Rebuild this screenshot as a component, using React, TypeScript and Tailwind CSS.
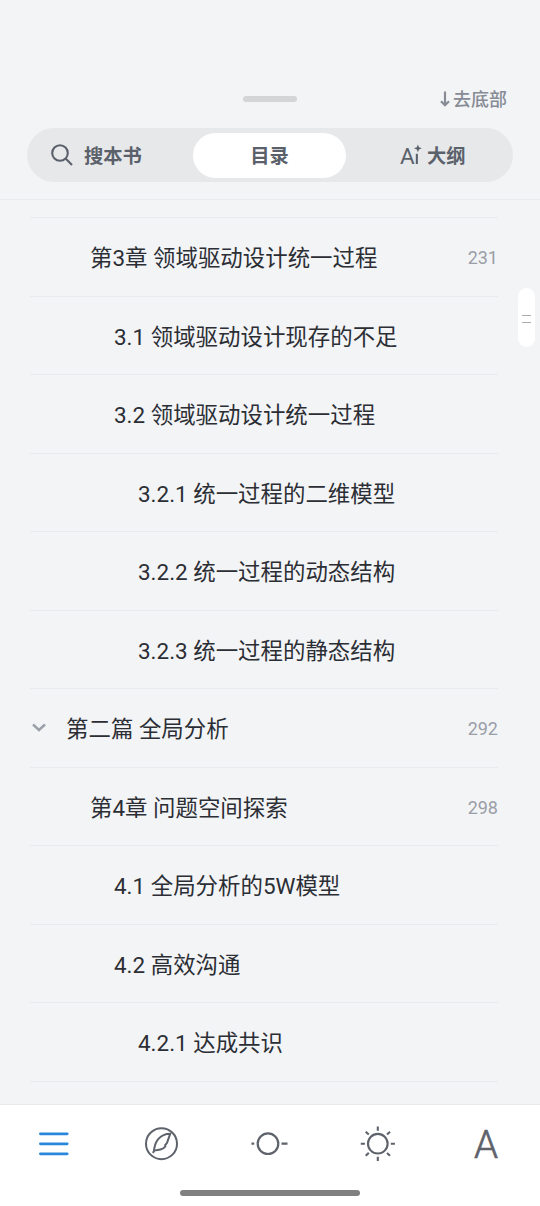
import clsx from 'clsx';

type Item = {
  title: string;
  level: number;
  page?: number;
  open?: boolean;
};

const items: Item[] = [
  { title: '第3章 领域驱动设计统一过程', level: 1, page: 231 },
  { title: '3.1 领域驱动设计现存的不足', level: 2 },
  { title: '3.2 领域驱动设计统一过程', level: 2 },
  { title: '3.2.1 统一过程的二维模型', level: 3 },
  { title: '3.2.2 统一过程的动态结构', level: 3 },
  { title: '3.2.3 统一过程的静态结构', level: 3 },
  { title: '第二篇 全局分析', level: 0, page: 292, open: true },
  { title: '第4章 问题空间探索', level: 1, page: 298 },
  { title: '4.1 全局分析的5W模型', level: 2 },
  { title: '4.2 高效沟通', level: 2 },
  { title: '4.2.1 达成共识', level: 3 },
];

const indent = ['pl-0', 'pl-6', 'pl-12', 'pl-[72px]'];

function SearchIcon() {
  return (
    <svg width="22" height="22" viewBox="0 0 22 22" fill="none" stroke="currentColor" strokeWidth="2.1">
      <circle cx="9" cy="9" r="7.8" />
      <path d="M14.6 14.6L21 21" />
    </svg>
  );
}

function AiIcon() {
  return (
    <span className="flex h-[22px] w-[21px] items-center">
      <span className="w-[14px] pt-0.5 text-[22.5px] leading-[22px]">A</span>
      <svg className="shrink-0" width="8" height="22" viewBox="0 0 8 22" fill="currentColor">
        <path d="M1.8 9.8h2.1v10.2H1.8z" />
        <path d="M3.9 0.4L5 3.2L7.8 4.3L5 5.4L3.9 8.2L2.8 5.4L0 4.3L2.8 3.2Z" />
      </svg>
    </span>
  );
}

function Row({ item }: { item: Item }) {
  return (
    <li className="flex h-[78.5px] items-center border-b border-[#e9eaed]">
      <span className="flex w-9 shrink-0 text-[#9ba0a9]">
        {item.open && (
          <svg className="ml-0.5" width="14" height="10" viewBox="0 0 14 10" fill="none" stroke="currentColor" strokeWidth="2.4">
            <path d="M1 1.5L7 7L13 1.5" />
          </svg>
        )}
      </span>
      <span className={clsx('flex-1 whitespace-nowrap pt-[3px] text-[22.45px] leading-8', indent[item.level])}>{item.title}</span>
      {item.page && <span className="pt-[3px] text-[18px] leading-6 text-[#9a9ea7]">{item.page}</span>}
    </li>
  );
}

function Header() {
  return (
    <header className="flex h-[200px] flex-col border-b border-[#e9eaed] px-[27px] pt-[86px]">
      <div className="grid h-[26px] grid-cols-3 grid-rows-[25px] items-center">
        <span className="col-start-2 h-1.5 w-[54px] justify-self-center rounded-full bg-[#d4d5d7]" />
        <button className="mr-1.5 flex items-center justify-self-end text-[#868b95]">
          <svg className="mr-[3px]" width="10" height="16" viewBox="0 0 10 16" fill="none" stroke="currentColor" strokeWidth="2.2">
            <path d="M5 0.5V14M1 10.2L5 14.2L9 10.2" />
          </svg>
          <span className="pt-[3px] text-[18px] font-medium leading-6">去底部</span>
        </button>
      </div>
      <nav className="mt-4 flex h-[54px] items-center rounded-full bg-[#e7e8ea] text-[19.3px] font-bold text-[#5b616b]">
        <button className="flex w-[166px] items-center pl-6">
          <SearchIcon />
          <span className="ml-[11px] pt-1">搜本书</span>
        </button>
        <button className="h-[45px] w-[153px] rounded-full bg-white pt-1">目录</button>
        <button className="ml-[54px] flex items-center">
          <span className="font-normal">
            <AiIcon />
          </span>
          <span className="ml-[6px] pt-1">大纲</span>
        </button>
      </nav>
    </header>
  );
}

function TabBar() {
  return (
    <footer className="flex h-[102px] flex-col items-center border-t border-[#e6e8ec] bg-white text-[#5d626b]">
      <div className="grid h-[77px] w-full grid-cols-5 place-items-center">
        <button className="text-[#2a87dc]">
          <svg width="30" height="24" viewBox="0 0 30 24" fill="none" stroke="currentColor" strokeWidth="2.8" strokeLinecap="round">
            <path d="M1.4 1.8H28.2M1.4 11.8H28.2M1.4 21.8H28.2" />
          </svg>
        </button>
        <button>
          <svg width="34" height="34" viewBox="0 0 34 34" fill="none" stroke="currentColor" strokeWidth="2">
            <circle cx="16.5" cy="16.7" r="15.5" />
            <path d="M25.2 6.8C20 6.8 16 9 13.2 12.2C10.3 15.6 9.5 19.2 8.9 23.8C12 22.3 17.5 23.8 20.4 19.2L20.2 18L22.1 15.8C23 12.8 24.2 10 25.2 6.8ZM7.8 25.8L9.6 23.3" />
          </svg>
        </button>
        <button>
          <svg width="38" height="24" viewBox="0 0 38 24" fill="none" stroke="currentColor" strokeWidth="2.2">
            <circle cx="17" cy="11.7" r="10.3" />
            <path d="M0.5 11.7H3.2M30.5 11.7H36.5" />
          </svg>
        </button>
        <button>
          <svg width="36" height="36" viewBox="0 0 36 36" fill="none" stroke="currentColor" strokeWidth="2.1">
            <circle cx="17.8" cy="17.7" r="9.8" />
            <path d="M17.8 0.4V4.7M17.8 30.7V35M0.8 17.7H4.9M30.8 17.7H34.9M5.7 5.7L8.8 8.5M27 8.5L30 5.7M5.7 29.7L8.8 26.900M27 26.9L30 29.7" />
          </svg>
        </button>
        <button className="pt-0.5 text-[38.5px] font-light leading-10 [-webkit-text-stroke:0.6px]">A</button>
      </div>
      <div className="mt-[7.500px] h-1.5 w-[180px] rounded-full bg-[#808080]" />
    </footer>
  );
}

export default function App() {
  return (
    <div className="relative flex h-[1206px] w-[540px] flex-col overflow-hidden bg-[#f3f4f6] font-[Roboto,'Noto_Sans_CJK_SC',sans-serif] text-[#2b2e34]">
      <Header />
      <main className="min-h-0 flex-1 overflow-hidden pl-[30px] pr-[42px] pt-[17px]">
        <ul className="border-t border-[#e9eaed]">
          {items.map((item) => (
            <Row key={item.title} item={item} />
          ))}
        </ul>
      </main>
      <TabBar />

      {/* Scroll handle */}
      <div className="absolute right-[5px] top-[288px] flex h-[59px] w-[17px] flex-col items-center justify-center gap-1.5 rounded-full bg-white pt-0.5">
        <span className="h-px w-[9px] bg-[#a9acb1]" />
        <span className="h-px w-[9px] bg-[#a9acb1]" />
      </div>
    </div>
  );
}
